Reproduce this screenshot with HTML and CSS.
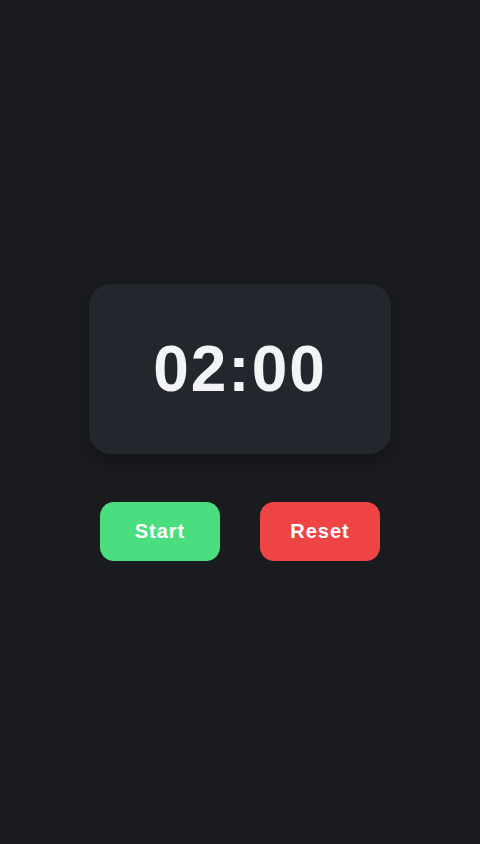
FILE: index.html
```html
<!DOCTYPE html>
<html lang="en">
<head>
<meta charset="utf-8">
<title>Timer</title>
<link rel="stylesheet" href="styles.css">
</head>
<body>
<main class="app">
  <div class="display"><span class="time">02:00</span></div>
  <div class="controls">
    <button class="btn btn-start">Start</button>
    <button class="btn btn-reset">Reset</button>
  </div>
</main>
</body>
</html>
```
FILE: styles.css
```css
html, body {
  margin: 0;
  padding: 0;
  height: 100%;
  background: #1a1b1f;
  font-family: "Liberation Sans", Arial, sans-serif;
}
.app {
  height: 100%;
  display: flex;
  flex-direction: column;
  align-items: center;
  justify-content: center;
  gap: 48px;
}
.display {
  width: 302px;
  height: 170px;
  background: #24262e;
  border-radius: 22px;
  box-shadow: 0 6px 16px rgba(0, 0, 0, 0.25);
  display: flex;
  align-items: center;
  justify-content: center;
}
.time {
  color: #f3f4f6;
  font-size: 64px;
  font-weight: 700;
  letter-spacing: 2px;
  line-height: 1;
}
.controls {
  display: flex;
  gap: 40px;
}
.btn {
  width: 120px;
  height: 59px;
  border: none;
  border-radius: 14px;
  color: #ffffff;
  font-family: "Liberation Sans", Arial, sans-serif;
  font-size: 20px;
  font-weight: 700;
  letter-spacing: 1px;
  padding: 0;
}
.btn-start { background: #4ade80; }
.btn-reset { background: #ef4444; }
```
